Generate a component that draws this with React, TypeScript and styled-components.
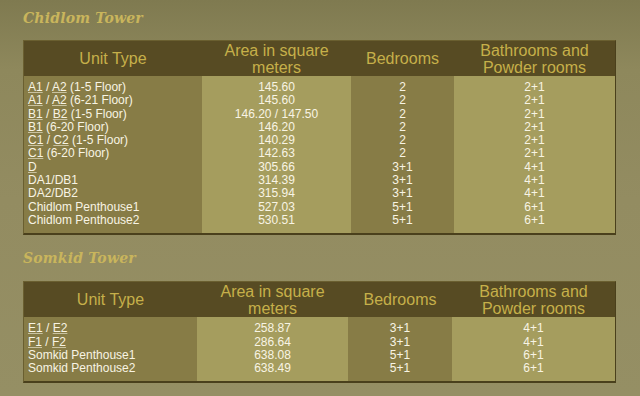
import React from 'react';
import styled, { createGlobalStyle } from 'styled-components';

const GlobalStyle = createGlobalStyle`
	html, body {
		margin: 0;
		padding: 0;
	}
	body {
		width: 640px;
		height: 396px;
		overflow: hidden;
		background: linear-gradient(to bottom, #7f7a50 0px, #8e885c 70px, #938c61 200px, #958f64 396px);
		font-family: 'Liberation Sans', Arial, sans-serif;
	}
`;

const Page = styled.div`
	padding: 0 0 0 23px;
`;

const Title = styled.h2`
	margin: 0;
	height: ${(p: { $h: number }) => p.$h}px;
	display: flex;
	align-items: center;
	font-family: 'DejaVu Serif', Georgia, serif;
	font-style: italic;
	font-weight: bold;
	font-size: 14px;
	color: #c9b55c;
	letter-spacing: 0.2px;
`;

const Table = styled.div<{ $cols: string }>`
	display: grid;
	grid-template-columns: ${(p) => p.$cols};
	width: 593px;
	box-sizing: border-box;
	border-top: 1px solid #6a5f30;
	border-left: 1px solid #6a5f30;
	border-right: 1px solid #4a401c;
	border-bottom: 2px solid #4a401c;
`;

const Head = styled.div`
	background: #574b23;
	color: #c6b04a;
	font-size: 16px;
	line-height: 17px;
	height: 35px;
	display: flex;
	align-items: center;
	justify-content: center;
	text-align: center;
`;

const Cell = styled.div<{ $light?: boolean; $left?: boolean }>`
	background: ${(p) => (p.$light ? '#a59d5e' : '#877c46')};
	color: #f8f4e4;
	font-size: 12px;
	line-height: 13.3px;
	padding: 5px ${(p) => (p.$left ? '4px' : '0')} 6px;
	text-align: ${(p) => (p.$left ? 'left' : 'center')};
	white-space: nowrap;
`;

const Line = styled.div``;

const Code = styled.span`
	text-decoration: underline;
	text-decoration-color: #c9c2a0;
	text-underline-offset: 1px;
`;

type Row = { unit: React.ReactNode; area: string; bed: string; bath: string };

const u = (a: string, b?: string, rest?: string) => (
	<>
		<Code>{a}</Code>
		{b && (
			<>
				{' / '}
				<Code>{b}</Code>
			</>
		)}
		{rest && ' ' + rest}
	</>
);

const chidlom: Row[] = [
	{ unit: u('A1', 'A2', '(1-5 Floor)'), area: '145.60', bed: '2', bath: '2+1' },
	{ unit: u('A1', 'A2', '(6-21 Floor)'), area: '145.60', bed: '2', bath: '2+1' },
	{ unit: u('B1', 'B2', '(1-5 Floor)'), area: '146.20 / 147.50', bed: '2', bath: '2+1' },
	{ unit: u('B1', undefined, '(6-20 Floor)'), area: '146.20', bed: '2', bath: '2+1' },
	{ unit: u('C1', 'C2', '(1-5 Floor)'), area: '140.29', bed: '2', bath: '2+1' },
	{ unit: u('C1', undefined, '(6-20 Floor)'), area: '142.63', bed: '2', bath: '2+1' },
	{ unit: u('D'), area: '305.66', bed: '3+1', bath: '4+1' },
	{ unit: 'DA1/DB1', area: '314.39', bed: '3+1', bath: '4+1' },
	{ unit: 'DA2/DB2', area: '315.94', bed: '3+1', bath: '4+1' },
	{ unit: 'Chidlom Penthouse1', area: '527.03', bed: '5+1', bath: '6+1' },
	{ unit: 'Chidlom Penthouse2', area: '530.51', bed: '5+1', bath: '6+1' },
];

const somkid: Row[] = [
	{ unit: u('E1', 'E2'), area: '258.87', bed: '3+1', bath: '4+1' },
	{ unit: u('F1', 'F2'), area: '286.64', bed: '3+1', bath: '4+1' },
	{ unit: 'Somkid Penthouse1', area: '638.08', bed: '5+1', bath: '6+1' },
	{ unit: 'Somkid Penthouse2', area: '638.49', bed: '5+1', bath: '6+1' },
];

const UnitTable = ({ rows, cols }: { rows: Row[]; cols: string }) => (
	<Table $cols={cols}>
		<Head>Unit Type</Head>
		<Head>
			Area in square
			<br />
			meters
		</Head>
		<Head>Bedrooms</Head>
		<Head>
			Bathrooms and
			<br />
			Powder rooms
		</Head>
		<Cell $left>
			{rows.map((r, i) => (
				<Line key={i}>{r.unit}</Line>
			))}
		</Cell>
		<Cell $light>
			{rows.map((r, i) => (
				<Line key={i}>{r.area}</Line>
			))}
		</Cell>
		<Cell>
			{rows.map((r, i) => (
				<Line key={i}>{r.bed}</Line>
			))}
		</Cell>
		<Cell $light>
			{rows.map((r, i) => (
				<Line key={i}>{r.bath}</Line>
			))}
		</Cell>
	</Table>
);

const Gap = styled.div`
	height: ${(p: { $h: number }) => p.$h}px;
`;

export default function App() {
	return (
		<Page>
			<GlobalStyle />
			<Title $h={36}>Chidlom Tower</Title>
			<Gap $h={4} />
			<UnitTable rows={chidlom} cols="178px 149px 103px 1fr" />
			<Gap $h={7} />
			<Title $h={32}>Somkid Tower</Title>
			<Gap $h={7} />
			<UnitTable rows={somkid} cols="173px 151px 104px 1fr" />
		</Page>
	);
}
